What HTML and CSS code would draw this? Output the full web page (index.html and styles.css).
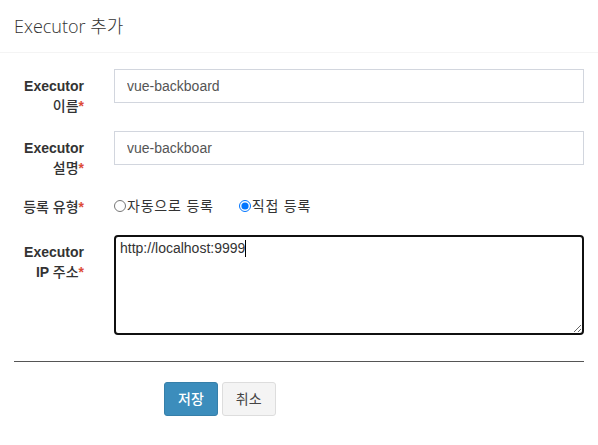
FILE: index.html
```html
<!DOCTYPE html>
<html lang="ko">
<head>
<meta charset="utf-8">
<title>Executor 추가</title>
<link rel="stylesheet" href="styles.css">
</head>
<body>
<div class="modal">
  <div class="modal-header">
    <h4 class="modal-title">Executor 추가</h4>
  </div>
  <form class="modal-body">
    <div class="form-group">
      <label class="control-label">Executor<br><span class="ko">이름</span><span class="req">*</span></label>
      <div class="control"><input class="form-control" type="text" value="vue-backboard"></div>
    </div>
    <div class="form-group">
      <label class="control-label">Executor<br><span class="ko">설명</span><span class="req">*</span></label>
      <div class="control"><input class="form-control" type="text" value="vue-backboar"></div>
    </div>
    <div class="form-group radio-group">
      <label class="control-label short"><span class="ko">등록 유형</span><span class="req">*</span></label>
      <div class="control radios">
        <label class="radio-inline"><input type="radio" name="type">자동으로 등록</label>
        <label class="radio-inline"><input type="radio" name="type" checked>직접 등록</label>
      </div>
    </div>
    <div class="form-group">
      <label class="control-label">Executor<br>IP <span class="ko">주소</span><span class="req">*</span></label>
      <div class="control">
        <div class="textarea"><span class="val">http://localhost:9999</span><span class="caret"></span></div>
      </div>
    </div>
    <hr class="divider">
    <div class="actions">
      <button type="button" class="btn btn-primary">저장</button>
      <button type="button" class="btn btn-default">취소</button>
    </div>
  </form>
</div>
</body>
</html>
```

FILE: styles.css
```css
html, body {
  margin: 0;
  background: #fff;
}
body {
  font-family: "Liberation Sans", "Noto Sans CJK KR", sans-serif;
  font-size: 14px;
  line-height: 20px;
  color: #333;
}
.modal-header {
  padding: 15px 14px;
  border-bottom: 1px solid #f4f4f4;
}
.modal-title {
  margin: 0;
  font-family: "Open Sans", "Noto Sans CJK KR", sans-serif;
  font-weight: 300;
  font-size: 18px;
  line-height: 22px;
  color: #333;
}
.modal-body {
  padding: 16px 14px 0;
}
.form-group {
  display: grid;
  grid-template-columns: 70px 1fr;
  column-gap: 30px;
  margin-bottom: 15px;
}
.form-group.radio-group {
  margin-bottom: 18px;
}
.control-label {
  padding-top: 7px;
  text-align: right;
  font-weight: bold;
}
.control-label.short {
  padding-top: 4px;
}
.ko {
  font-weight: 500;
}
.req {
  color: #dd4b39;
}
.form-control {
  display: block;
  box-sizing: border-box;
  width: 100%;
  height: 34px;
  margin: 0;
  padding: 6px 12px;
  border: 1px solid #d2d6de;
  border-radius: 0;
  font-family: "Liberation Sans", "Noto Sans CJK KR", sans-serif;
  font-size: 14px;
  color: #555;
  outline: none;
}
.radios {
  display: flex;
  gap: 25px;
  padding-top: 1px;
}
.radio-inline {
  display: flex;
  align-items: center;
  color: #333;
  letter-spacing: 0.8px;
}
.radio-inline input {
  margin: 0 1px 0 0;
  width: 12px;
  height: 12px;
}
.textarea {
  box-sizing: border-box;
  height: 100px;
  padding: 2px 4px;
  border: 2px solid #101010;
  border-radius: 4px;
  overflow: auto;
  resize: both;
  color: #333;
  font-size: 14px;
  line-height: 18px;
}
.caret {
  display: inline-block;
  width: 1px;
  height: 17px;
  background: #000;
  vertical-align: -4px;
}
.divider {
  margin: 26px 0 20px;
  border: 0;
  border-top: 1px solid #555;
  height: 0;
}
.actions {
  display: flex;
  gap: 4px;
  margin-left: 150px;
}
.btn {
  box-sizing: border-box;
  height: 34px;
  padding: 6px 13px;
  border: 1px solid transparent;
  border-radius: 3px;
  font-family: "Liberation Sans", "Noto Sans CJK KR", sans-serif;
  font-size: 14px;
  line-height: 20px;
  cursor: pointer;
}
.btn-primary {
  background: #3c8dbc;
  border-color: #367fa9;
  color: #fff;
  font-weight: 500;
}
.btn-default {
  background: #f4f4f4;
  border-color: #ddd;
  color: #444;
}
```
